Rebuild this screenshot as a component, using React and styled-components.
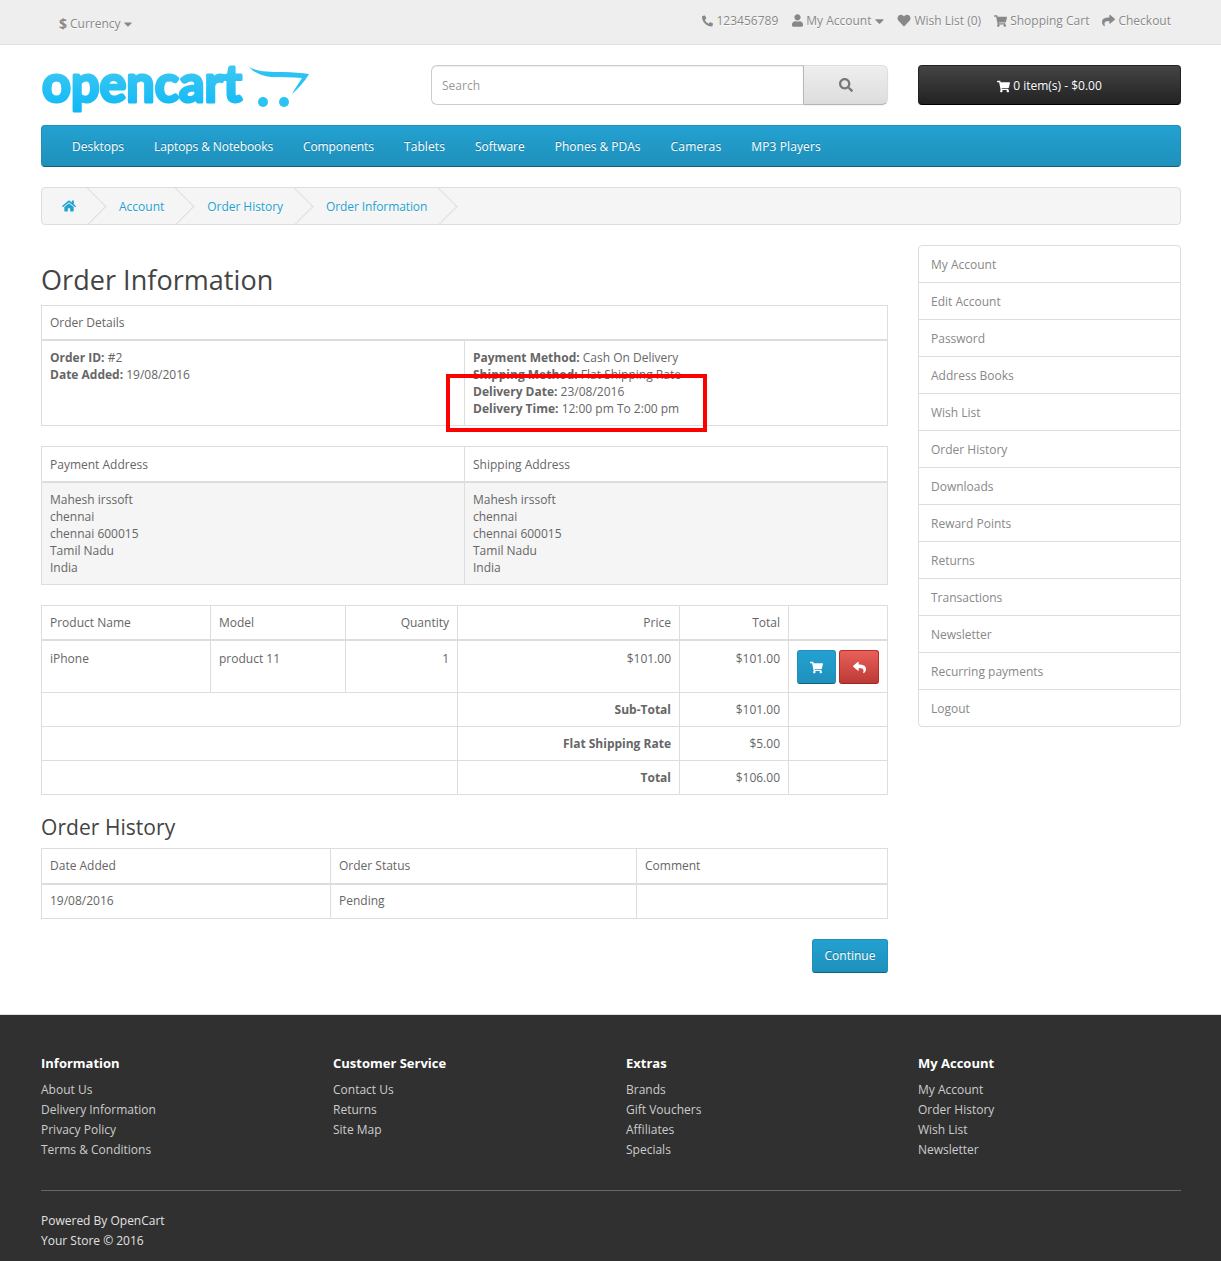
import React from "react";
import styled, { createGlobalStyle } from "styled-components";
import { FaPhoneAlt, FaUser, FaHeart, FaShoppingCart, FaShare, FaHome, FaSearch, FaReply, FaCaretDown } from "react-icons/fa";

const Global = createGlobalStyle`
  * { box-sizing: border-box; }
  html, body { margin: 0; padding: 0; background: #fff; }
  body { font-family: "Open Sans", sans-serif; font-size: 12px; line-height: 20px; color: #666; }
  a { color: inherit; text-decoration: none; }
  ul { list-style: none; margin: 0; padding: 0; }
`;

const Container = styled.div`
  width: 1140px;
  margin-left: 41px;
`;
const TopBar = styled.nav`
  height: 45px;
  background: #eee;
  border-bottom: 1px solid #e2e2e2;
  margin-bottom: 20px;
`;
const TopInner = styled(Container)`
  display: flex;
  justify-content: space-between;
`;
const Currency = styled.div`
  display: flex;
  align-items: center;
  height: 44px;
  padding: 3px 0 0 18px;
  color: #888;
  text-shadow: 0 1px 0 #fff;
  gap: 3px;
  svg { flex: none; }
`;
const Dollar = styled.strong`
  font-size: 14px;
`;
const TopLinks = styled.ul`
  display: flex;
  gap: 13px;
  padding: 11px 10px 0 0;
  color: #888;
  text-shadow: 0 1px 0 #fff;
`;
const TopLink = styled.li`
  display: flex;
  align-items: center;
  gap: 3px;
  height: 20px;
  margin-right: ${p => p.$after ?? 0}px;
  white-space: nowrap;
  svg { flex: none; margin-top: -1px; }
`;
const PhoneIcon = styled(FaPhoneAlt)`
  width: 11px;
  height: 12px;
`;
const UserIcon = styled(FaUser)`
  width: 11px;
  height: 13px;
`;
const HeartIcon = styled(FaHeart)`
  width: 14px;
  height: 13px;
`;
const CartIcon = styled(FaShoppingCart)`
  width: 13px;
  height: 12px;
`;
const ShareIcon = styled(FaShare)`
  width: 13px;
  height: 13px;
`;
const Caret = styled(FaCaretDown)`
  width: ${p => p.$w ?? 9}px;
  height: 14px;
  margin-left: ${p => p.$m ?? 1}px;
`;
const Header = styled(Container)`
  display: flex;
  height: 60px;
`;
const Logo = styled.svg`
  width: 390px;
  height: 54px;
  flex: none;
  overflow: visible;
`;
const LogoWord = styled.text`
  font-family: "Lato", sans-serif;
  font-weight: 700;
  font-size: 52px;
`;
const Search = styled.div`
  display: flex;
  width: 457px;
  height: 40px;
  margin-right: 30px;
`;
const SearchInput = styled.input`
  flex: 1;
  min-width: 0;
  height: 40px;
  padding: 1px 10px 0;
  border: 1px solid #ccc;
  border-right: 0;
  border-radius: 6px 0 0 6px;
  font: 12px/20px "Open Sans", sans-serif;
  color: #555;
  box-shadow: inset 0 1px 1px rgba(0,0,0,.075);
  &::placeholder { color: #999; opacity: 1; }
`;
const SearchButton = styled.button`
  width: 85px;
  height: 40px;
  padding: 3px 0 0;
  color: #777;
  font-size: 14px;
  border: 1px solid;
  border-color: #ddd #ddd #b3b3b3 #b7b7b7;
  border-radius: 0 6px 6px 0;
  background: linear-gradient(to bottom, #eee, #ddd);
  text-shadow: 0 1px 0 #fff;
  box-shadow: inset 0 1px 0 rgba(255,255,255,.2), 0 1px 2px rgba(0,0,0,.05);
`;
const CartButton = styled.button`
  flex: 1;
  height: 40px;
  display: flex;
  align-items: center;
  justify-content: center;
  gap: 3px;
  padding: 2px 0 0;
  color: #fff;
  font: 12px/18px "Open Sans", sans-serif;
  border: 1px solid;
  border-color: #222 #222 #000;
  border-radius: 4px;
  background: linear-gradient(to bottom, #444, #222);
  text-shadow: 0 -1px 0 rgba(0,0,0,.25);
  svg { font-size: 13px; }
`;
const Menu = styled.nav`
  display: flex;
  height: 42px;
  padding: 0 15px;
  margin-bottom: 20px;
  border: 1px solid;
  border-color: #1f90bb #1f90bb #145e7a;
  border-radius: 4px;
  background: linear-gradient(to bottom, #23a1d1, #1f90bb);
`;
const MenuItem = styled.a`
  padding: 11px 15px 9px;
  color: #fff;
  letter-spacing: ${p => p.$track}px;
  text-shadow: 0 -1px 0 rgba(0,0,0,.25);
`;
const Crumbs = styled.ul`
  display: flex;
  gap: 3px;
  padding: 9px 0 7px;
  margin-bottom: 20px;
  height: 38px;
  background: #f5f5f5;
  border: 1px solid #ddd;
  border-radius: 4px;
  overflow: hidden;
`;
const Crumb = styled.li`
  position: relative;
  padding: 0 20px;
  color: #23a1d1;
  letter-spacing: ${p => p.$track ?? 0}px;
  white-space: nowrap;
  text-shadow: 0 1px 0 #fff;
  &::after {
    content: "";
    position: absolute;
    top: -4px;
    right: -5px;
    width: 26px;
    height: 26px;
    border-right: 1px solid #ddd;
    border-bottom: 1px solid #ddd;
    transform: rotate(-45deg);
  }
`;
const HomeIcon = styled(FaHome)`
  display: block;
  width: 14px;
  height: 18px;
`;
const Main = styled(Container)`
  display: grid;
  grid-template-columns: 847px 263px;
  gap: 30px;
  align-items: start;
`;
const Title = styled.h2`
  margin: 20px 0 10px;
  font-size: 27px;
  line-height: 29.7px;
  font-weight: 500;
  letter-spacing: 0.05px;
  color: #444;
`;
const Subtitle = styled.h3`
  margin: 21px 0 9px;
  font-size: 21px;
  line-height: 23.1px;
  font-weight: 500;
  letter-spacing: 0.05px;
  color: #444;
`;
const TableWrap = styled.div`
  position: relative;
`;
const Highlight = styled.div`
  position: absolute;
  left: 405px;
  top: 69px;
  width: 261px;
  height: 58px;
  border: 4px solid #f00;
  pointer-events: none;
`;
const Table = styled.table`
  width: 100%;
  table-layout: fixed;
  border-collapse: collapse;
  margin-bottom: 20px;
  line-height: 17.14px;
`;
const Col = styled.col`
  width: ${p => p.$w}px;
`;
const Th = styled.th`
  padding: ${p => (p.$drop ? "9px 8px 7px" : "8px")};
  font-weight: 400;
  text-align: ${p => (p.$right ? "right" : "left")};
  border: 1px solid #ddd;
  border-bottom-width: 2px;
`;
const Td = styled.td`
  padding: ${p => (p.$drop ? "9px 8px 8px" : p.$lift ? "7px 8px 9px" : "8px")};
  vertical-align: top;
  text-align: ${p => (p.$right ? "right" : "left")};
  border: 1px solid #ddd;
  background: ${p => (p.$shade ? "#f5f5f5" : "transparent")};
`;
const TotalTd = styled.td`
  padding: 8px;
  line-height: 17px;
  text-align: right;
  border: 1px solid #ddd;
`;
const Actions = styled.div`
  display: flex;
  gap: 3px;
`;
const IconButton = styled.button`
  width: ${p => p.$w}px;
  height: 34px;
  padding: 0;
  color: #fff;
  font-size: 13px;
  display: flex;
  align-items: center;
  justify-content: center;
  border: 1px solid;
  border-radius: 3px;
  text-shadow: 0 -1px 0 rgba(0,0,0,.25);
  border-color: ${p => (p.$red ? "#b92c28 #b92c28 #a02622" : "#1f90bb #1f90bb #145e7a")};
  background: ${p => (p.$red ? "linear-gradient(to bottom, #e8605a, #bc3a35)" : "linear-gradient(to bottom, #23a1d1, #1f90bb)")};
`;
const Buttons = styled.div`
  display: flex;
  justify-content: flex-end;
`;
const ContinueButton = styled.a`
  width: 76px;
  height: 34px;
  display: flex;
  align-items: center;
  justify-content: center;
  color: #fff;
  line-height: 17px;
  border: 1px solid;
  border-color: #1f90bb #1f90bb #145e7a;
  border-radius: 3px;
  background: linear-gradient(to bottom, #23a1d1, #1f90bb);
  text-shadow: 0 -1px 0 rgba(0,0,0,.25);
`;
const Side = styled.ul`
  display: flex;
  flex-direction: column;
`;
const SideItem = styled.li`
  padding: 9px 12px 7px;
  height: 38px;
  margin-bottom: -1px;
  color: #888;
  border: 1px solid #ddd;
  text-shadow: 0 1px 0 #fff;
  &:first-child { border-radius: 4px 4px 0 0; }
  &:last-child { border-radius: 0 0 4px 4px; }
`;
const Footer = styled.footer`
  margin-top: 41px;
  padding-top: 31px;
  background: #303030;
  border-top: 1px solid #ddd;
  color: #e2e2e2;
`;
const FooterGrid = styled.div`
  display: grid;
  grid-template-columns: 292px 293px 292px 263px;
  margin-bottom: 20px;
`;
const FooterHead = styled.h5`
  margin: 10px 0;
  font-size: 13px;
  line-height: 14.3px;
  font-weight: 700;
  color: #fff;
`;
const FooterList = styled.ul`
  margin-bottom: 10px;
`;
const FooterLink = styled.li`
  color: #ccc;
`;
const FooterRule = styled.hr`
  margin: 0 0 20px;
  border: 0;
  border-bottom: 1px solid #666;
`;
const FooterNote = styled.p`
  margin: 0;
  padding-bottom: 10px;
`;

const menu = [["Desktops", 0], ["Laptops & Notebooks", -0.1], ["Components", -0.1], ["Tablets", 0.1], ["Software", 0], ["Phones & PDAs", 0], ["Cameras", 0.2], ["MP3 Players", 0.1]];
const side = ["My Account", "Edit Account", "Password", "Address Books", "Wish List", "Order History", "Downloads", "Reward Points", "Returns", "Transactions", "Newsletter", "Recurring payments", "Logout"];
const address = ["Mahesh irssoft", "chennai", "chennai 600015", "Tamil Nadu", "India"];
const footer = [
  ["Information", ["About Us", "Delivery Information", "Privacy Policy", "Terms & Conditions"]],
  ["Customer Service", ["Contact Us", "Returns", "Site Map"]],
  ["Extras", ["Brands", "Gift Vouchers", "Affiliates", "Specials"]],
  ["My Account", ["My Account", "Order History", "Wish List", "Newsletter"]],
];
const totals = [["Sub-Total", "$101.00"], ["Flat Shipping Rate", "$5.00"], ["Total", "$106.00"]];

const Lines = ({ items }) => items.map((t, i) => <React.Fragment key={i}>{i > 0 && <br />}{t}</React.Fragment>);

export default function App() {
  return (
    <>
      <Global />
      <TopBar>
        <TopInner>
          <Currency><Dollar>$</Dollar><span>Currency</span><Caret $w={8} $m={0} /></Currency>
          <TopLinks>
            <TopLink $after={1}><PhoneIcon />123456789</TopLink>
            <TopLink><UserIcon />My Account<Caret /></TopLink>
            <TopLink><HeartIcon />Wish List (0)</TopLink>
            <TopLink><CartIcon />Shopping Cart</TopLink>
            <TopLink><ShareIcon />Checkout</TopLink>
          </TopLinks>
        </TopInner>
      </TopBar>
      <Header>
        <Logo viewBox="0 0 390 54">
          <defs>
            <linearGradient id="logoFill" x1="0" y1="0" x2="0" y2="1">
              <stop offset="0" stopColor="#4ccdf2" />
              <stop offset="1" stopColor="#0db8f6" />
            </linearGradient>
          </defs>
          <LogoWord x="1" y="37" fill="url(#logoFill)" stroke="url(#logoFill)" strokeWidth="3" strokeLinejoin="round" textLength="200" lengthAdjust="spacingAndGlyphs">opencart</LogoWord>
          <path d="M207 1C213 6 225 7 242 7C252 7 260 8 268 9C264 16 257 24 251 29C254 23 258 18 261 13C250 12 240 12 230 12C220 11 212 7 207 1Z" fill="#2ac3f4" />
          <circle cx="222" cy="37" r="5" fill="#2ac3f4" />
          <circle cx="243" cy="37" r="5" fill="#2ac3f4" />
        </Logo>
        <Search>
          <SearchInput placeholder="Search" />
          <SearchButton><FaSearch /></SearchButton>
        </Search>
        <CartButton><FaShoppingCart />0 item(s) - $0.00</CartButton>
      </Header>
      <Container>
        <Menu>{menu.map(([m, t]) => <MenuItem key={m} $track={t}>{m}</MenuItem>)}</Menu>
        <Crumbs>
          <Crumb><HomeIcon /></Crumb>
          <Crumb>Account</Crumb>
          <Crumb $track={-0.05}>Order History</Crumb>
          <Crumb $track={-0.1}>Order Information</Crumb>
        </Crumbs>
      </Container>
      <Main>
        <div>
          <Title>Order Information</Title>
          <TableWrap>
            <Table>
              <thead><tr><Th colSpan={2}>Order Details</Th></tr></thead>
              <tbody>
                <tr>
                  <Td>
                    <b>Order ID:</b> #2<br />
                    <b>Date Added:</b> 19/08/2016
                  </Td>
                  <Td>
                    <b>Payment Method:</b> Cash On Delivery<br />
                    <b>Shipping Method:</b> Flat Shipping Rate<br />
                    <b>Delivery Date:</b> 23/08/2016<br />
                    <b>Delivery Time:</b> 12:00 pm To 2:00 pm
                  </Td>
                </tr>
              </tbody>
            </Table>
            <Highlight />
          </TableWrap>
          <Table>
            <thead><tr><Th $drop>Payment Address</Th><Th $drop>Shipping Address</Th></tr></thead>
            <tbody>
              <tr>
                <Td $shade><Lines items={address} /></Td>
                <Td $shade><Lines items={address} /></Td>
              </tr>
            </tbody>
          </Table>
          <Table>
            <colgroup>
              <Col $w={169} /><Col $w={135} /><Col $w={112} /><Col $w={222} /><Col $w={109} /><Col $w={99} />
            </colgroup>
            <thead>
              <tr>
                <Th>Product Name</Th><Th>Model</Th><Th $right>Quantity</Th><Th $right>Price</Th><Th $right>Total</Th><Th />
              </tr>
            </thead>
            <tbody>
              <tr>
                <Td $drop>iPhone</Td>
                <Td $drop>product 11</Td>
                <Td $drop $right>1</Td>
                <Td $drop $right>$101.00</Td>
                <Td $drop $right>$101.00</Td>
                <Td $drop>
                  <Actions>
                    <IconButton $w={39}><FaShoppingCart /></IconButton>
                    <IconButton $w={40} $red><FaReply /></IconButton>
                  </Actions>
                </Td>
              </tr>
              {totals.map(([k, v]) => (
                <tr key={k}>
                  <TotalTd colSpan={3} />
                  <TotalTd><b>{k}</b></TotalTd>
                  <TotalTd>{v}</TotalTd>
                  <TotalTd />
                </tr>
              ))}
            </tbody>
          </Table>
          <Subtitle>Order History</Subtitle>
          <Table>
            <colgroup><Col $w={289} /><Col $w={306} /><Col $w={251} /></colgroup>
            <thead><tr><Th>Date Added</Th><Th>Order Status</Th><Th>Comment</Th></tr></thead>
            <tbody><tr><Td $lift>19/08/2016</Td><Td $lift>Pending</Td><Td $lift /></tr></tbody>
          </Table>
          <Buttons><ContinueButton>Continue</ContinueButton></Buttons>
        </div>
        <Side>{side.map(s => <SideItem key={s}>{s}</SideItem>)}</Side>
      </Main>
      <Footer>
        <Container>
          <FooterGrid>
            {footer.map(([h, links]) => (
              <div key={h}>
                <FooterHead>{h}</FooterHead>
                <FooterList>{links.map(l => <FooterLink key={l}>{l}</FooterLink>)}</FooterList>
              </div>
            ))}
          </FooterGrid>
          <FooterRule />
          <FooterNote>Powered By OpenCart<br />Your Store © 2016</FooterNote>
        </Container>
      </Footer>
    </>
  );
}
